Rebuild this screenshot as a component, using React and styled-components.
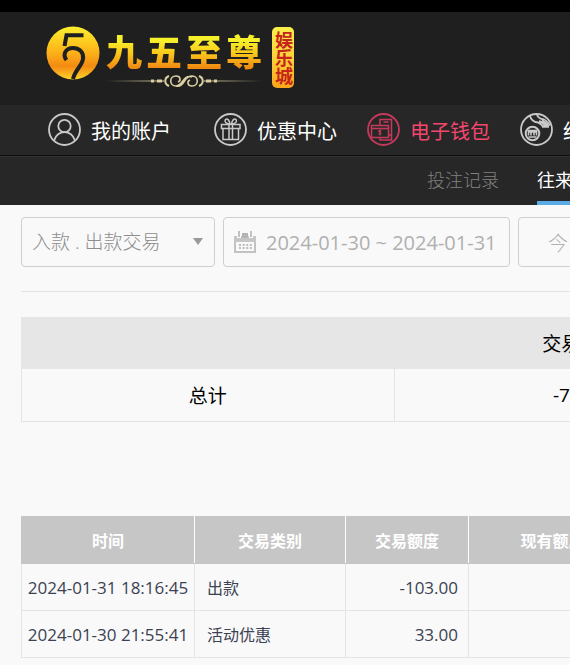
import React, { useState } from 'react'
import styled, { createGlobalStyle } from 'styled-components';


const GlobalStyle = createGlobalStyle`
  body {
    margin: 0;
    background-color: #F9F9F9;
    font-family: 'Open Sans', 'Noto Sans CJK SC', sans-serif;
  }

  * {
    box-sizing: border-box;
  }
`

const Page = styled.div`
  overflow: hidden;
  border-top: 12px solid #000;
`

const Header = styled.header`
  display: flex;
  height: 93px;
  padding: 14px 46px;
  background-color: #1F1F1F;
`

const Logo = styled.a`
  display: flex;
  align-items: flex-start;
  gap: 6px;
  text-decoration: none;

  svg {
    flex: none;
  }
`

const Brand = styled.span`
  display: flex;
  flex-direction: column;
  align-items: center;
  padding-top: 6px;
`

const BrandName = styled.span`
  display: flex;
  gap: 4px;
  font-size: 36px;
  line-height: 42px;
  font-weight: 900;
  color: transparent;
  background: linear-gradient(#F6F02A 20%, #FBC91B 50%, #F08A12 85%);
  background-clip: text;
`

const Seal = styled.span`
  width: 22px;
  height: 61px;
  margin-top: 1px;
  margin-left: 4px;
  border-radius: 5px;
  background: linear-gradient(#F8EE4C, #FFD23A 50%, #F8A51C);
  color: #C4241A;
  font-size: 18px;
  line-height: 22px;
  font-weight: 700;
  text-align: center;
  writing-mode: vertical-rl;
`

const MainNav = styled.nav`
  display: flex;
  gap: 30px;
  height: 51px;
  padding-left: 48px;
  background-color: #272727;
  border-bottom: 1px solid #0E0E0E;
`

const NavLink = styled.a`
  display: flex;
  flex: none;
  align-items: center;
  gap: 9px;
  margin-right: ${(props) => (props.$first ? '13px' : '0')};
  color: ${(props) => (props.$active ? '#F4466E' : '#FFF')};
  font-size: 20px;
  text-decoration: none;
  white-space: nowrap;

  svg {
    color: ${(props) => (props.$active ? '#C53A5C' : '#C9C9C9')};
  }
`

const SubNav = styled.nav`
  display: flex;
  gap: 38px;
  height: 49px;
  padding-left: 427px;
  background-color: #272727;
  border-top: 1px solid #333;
`

const SubLink = styled.a`
  flex: none;
  color: ${(props) => (props.$active ? '#FFF' : '#808080')};
  border-bottom: 4px solid ${(props) => (props.$active ? '#5AAAE6' : 'transparent')};
  font-size: 18px;
  font-weight: ${(props) => (props.$active ? '400' : '300')};
  line-height: 46px;
  text-decoration: none;
`

const Content = styled.main`
  min-width: 788px;
  padding: 12px 21px;
`

const Filters = styled.form`
  display: flex;
  gap: 8px;
  padding-bottom: 24px;
  border-bottom: 1px solid #E4E4E4;
`

const Field = styled.div`
  display: flex;
  align-items: center;
  width: ${(props) => props.$width};
  height: 50px;
  padding: 0 10px;
  border: 1px solid #CFCFCF;
  border-radius: 4px;
  color: #B8B8B8;
`

const TypeSelect = styled.select`
  flex: 1;
  min-width: 0;
  padding: 0;
  border: 0;
  appearance: none;
  background: none;
  color: #8C8C8C;
  font-family: inherit;
  font-size: 19px;
  font-weight: 300;
`

const DateInput = styled.input`
  flex: 1;
  min-width: 0;
  margin-left: 10px;
  padding: 0;
  border: 0;
  background: none;
  color: #B0B0B0;
  font-family: inherit;
  font-size: 20px;
`

const DayButton = styled.button`
  width: 100px;
  height: 50px;
  border: 1px solid #CFCFCF;
  border-radius: 4px;
  background: none;
  color: #B0B0B0;
  font-family: inherit;
  font-size: 20px;
  font-weight: 300;
`

const SummaryTable = styled.table`
  width: 100%;
  margin-top: 25px;
  border-collapse: collapse;
  table-layout: fixed;
  color: #000;
  font-size: 19px;
  text-align: center;

  th {
    height: 51px;
    padding: 0;
    border: 1px solid #E6E6E6;
    background-color: #E6E6E6;
    font-weight: 400;
  }

  td {
    height: 53px;
    padding: 0;
    border: 1px solid #E4E4E4;
  }
`

const RecordTable = styled.table`
  width: 100%;
  margin-top: 94px;
  border-collapse: collapse;
  table-layout: fixed;
  color: #3B4252;
  font-size: 16px;

  th {
    height: 47px;
    padding: 0;
    border: 1px solid #C6C6C6;
    border-right-color: #FFF;
    background-color: #C6C6C6;
    color: #FFF;
    font-weight: 700;
  }

  th + th {
    border-left-color: #FFF;
  }

  td {
    height: 47px;
    padding: 0 12px;
    border: 1px solid #E4E4E4;
  }
`

const TimeCell = styled.td`
  && {
    padding: 0;
    text-align: center;
  }
  font-size: 17px;
  white-space: nowrap;
`

const MoneyCell = styled.td`
  && {
    padding-right: 10px;
  }
  font-size: 17px;
  text-align: right;
`


const records = [
  { time: '2024-01-31 18:16:45', type: '出款', amount: '-103.00' },
  { time: '2024-01-30 21:55:41', type: '活动优惠', amount: '33.00' },
]


function Coin() {
  return (
    <svg width="54" height="54" viewBox="0 0 54 54" aria-hidden="true">
      <defs>
        <linearGradient id="coin" x1="0" y1="0" x2="0" y2="1">
          <stop offset="0" stopColor="#FBEF2E" />
          <stop offset="0.45" stopColor="#FDB71A" />
          <stop offset="0.75" stopColor="#F48A12" />
          <stop offset="1" stopColor="#FBD42A" />
        </linearGradient>
      </defs>
      <circle cx="27" cy="27" r="26.500" fill="url(#coin)" />
      <path d="M37.500 9.300H20.500L18.500 20" fill="none" stroke="#1F1F1F" strokeWidth="4" />
      <path d="M20.500 34C16 28 20 22 27 22c7 0 11 5 10 11-1 7-8 11-10 20" fill="none" stroke="#1F1F1F" strokeWidth="4" />
    </svg>
  )
}

function Flourish() {
  return (
    <svg width="156" height="14" viewBox="0 0 156 14" fill="none" stroke="#D9CFA0" aria-hidden="true">
      <defs>
        <linearGradient id="fade" gradientUnits="userSpaceOnUse" x1="0" y1="0" x2="156" y2="0">
          <stop offset="0" stopColor="#D9CFA0" stopOpacity="0" />
          <stop offset="0.35" stopColor="#D9CFA0" />
          <stop offset="0.65" stopColor="#D9CFA0" />
          <stop offset="1" stopColor="#D9CFA0" stopOpacity="0" />
        </linearGradient>
      </defs>
      <path d="M0 6.500h58v1H0zM98 6.500h58v1H98z" fill="url(#fade)" stroke="none" />
      <path d="M45 7h3M51 7h5M100 7h5M108 7h3" strokeWidth="3" />
      <path d="M63 2c-5 2-5 8 0 10M93 2c5 2 5 8 0 10" strokeWidth="2" />
      <path d="M86 3C77 0 77 12 70 12c-7 0-7-10 0-10 5 0 5 5 2 6M70 12c9 2 7-10 16-10 7 0 7 10 0 10-5 0-5-5-2-6" strokeWidth="1.600" />
    </svg>
  )
}

function RoundIcon({ children }) {
  return (
    <svg width="34" height="34" viewBox="0 0 34 34" fill="none" stroke="currentColor" strokeWidth="1.500" aria-hidden="true">
      <circle cx="16.500" cy="16.500" r="15.500" strokeWidth="1.800" />
      {children}
    </svg>
  )
}

function UserIcon() {
  return (
    <RoundIcon>
      <circle cx="16.500" cy="13" r="6.200" strokeWidth="1.800" />
      <path d="M6 27.500c2-5.500 6-8.300 10.500-8.300S25 22 27 27.500" strokeWidth="1.800" />
    </RoundIcon>
  )
}

function GiftIcon() {
  return (
    <RoundIcon>
      <path d="M7.500 11.500h18.500v4H7.500zM9 15.500h15.500v11H9zM15 11.500v15M18.500 11.500v15" />
      <path d="M15.500 11C12 10.500 10 9 11.500 6.500c2-1.500 4 1 4.500 4.500M18 11c3.500-.5 5.500-2 4-4.500-2-1.500-4 1-4.500 4.500" />
    </RoundIcon>
  )
}

function WalletIcon() {
  return (
    <RoundIcon>
      <path d="M13 12.500V6.500h11.500V27H13v-2.500M16.500 9h5M21.500 22h3" />
      <path d="M4.500 12.500h17v12h-17zM4.500 15.500h17" />
      <path d="M14.500 17.500c-2.500-.6-3.500.8-1.700 1.700s1.500 2.300-1.300 1.800M13 16.500v6" strokeWidth="1.200" />
    </RoundIcon>
  )
}

function BonusIcon() {
  return (
    <RoundIcon>
      <circle cx="12.500" cy="20.500" r="6.800" strokeWidth="2" />
      <path d="M7.500 17.500h10M8.500 22.500v-3.500h8v3.500M11 19.500v3M14 19.500v3M8.500 24h8" strokeWidth="1.600" />
      <path d="M10 3c1 4 4 6 8 6.500 2 .3 3 2 4.500 3.500M17 2c1 3 4 4 7 4.500 2 .5 4 3 6 6" strokeWidth="1.800" />
      <path d="M19 8.500c3 0 4 1.500 8 5M22 7.500c2 1 4 2 6 5M22 13.500h7" strokeWidth="2.400" />
    </RoundIcon>
  )
}

function CalendarIcon() {
  return (
    <svg width="22" height="22" viewBox="0 0 22 22" aria-hidden="true">
      <path d="M1 6h20v15H1z" fill="none" stroke="#C2C2C2" strokeWidth="2" />
      <path d="M0 5h22v6H0z" fill="#C6C6C6" />
      <path d="M8 2h6v5H8z" fill="#B4B4B4" />
      <path d="M5 0v7M17 0v7" stroke="#F9F9F9" strokeWidth="4" />
      <path d="M5 0v6M17 0v6" stroke="#C2C2C2" strokeWidth="2" />
      <path d="M5 14h13M5 17h13" stroke="#BDBDBD" strokeWidth="2" strokeDasharray="2 1.600" />
    </svg>
  )
}


export default function App() {

  const [type, setType] = useState('all');
  const [date, setDate] = useState('2024-01-30 ~ 2024-01-31');

  return (
    <>
      <GlobalStyle />
      <Page lang="zh-CN">
        <Header>
          <Logo href="#home">
            <Coin />
            <Brand>
              <BrandName>
                {[...'九五至尊'].map((char) => <span key={char}>{char}</span>)}
              </BrandName>
              <Flourish />
            </Brand>
            <Seal>娱乐城</Seal>
          </Logo>
        </Header>

        <MainNav>
          <NavLink href="#account" $first><UserIcon />我的账户</NavLink>
          <NavLink href="#promo"><GiftIcon />优惠中心</NavLink>
          <NavLink href="#wallet" $active><WalletIcon />电子钱包</NavLink>
          <NavLink href="#bonus"><BonusIcon />红利</NavLink>
        </MainNav>

        <SubNav>
          <SubLink href="#bets">投注记录</SubLink>
          <SubLink href="#history" $active>往来记录</SubLink>
        </SubNav>

        <Content>
          <Filters onSubmit={(e) => e.preventDefault()}>
            <Field $width="194px">
              <TypeSelect aria-label="交易类别" value={type} onChange={(e) => setType(e.target.value)}>
                <option value="all">入款 . 出款交易</option>
              </TypeSelect>
              <svg width="12" height="8" viewBox="0 0 12 8" aria-hidden="true">
                <path d="M1 0h10L6 7z" fill="#999" />
              </svg>
            </Field>
            <Field $width="287px">
              <CalendarIcon />
              <DateInput aria-label="时间" value={date} onChange={(e) => setDate(e.target.value)} />
            </Field>
            <DayButton type="button">今日</DayButton>
          </Filters>

          <SummaryTable>
            <thead>
              <tr>
                <th></th>
                <th scope="col">交易额度</th>
              </tr>
            </thead>
            <tbody>
              <tr>
                <td>总计</td>
                <td>-70.00</td>
              </tr>
            </tbody>
          </SummaryTable>

          <RecordTable>
            <colgroup>
              <col style={{ width: '173px' }} />
              <col style={{ width: '151px' }} />
              <col style={{ width: '123px' }} />
              <col style={{ width: '168px' }} />
              <col />
            </colgroup>
            <thead>
              <tr>
                <th scope="col">时间</th>
                <th scope="col">交易类别</th>
                <th scope="col">交易额度</th>
                <th scope="col">现有额度</th>
                <th scope="col">备注</th>
              </tr>
            </thead>
            <tbody>
              {records.map((item) => (
                <tr key={item.time}>
                  <TimeCell>{item.time}</TimeCell>
                  <td>{item.type}</td>
                  <MoneyCell>{item.amount}</MoneyCell>
                  <td></td>
                  <td></td>
                </tr>
              ))}
            </tbody>
          </RecordTable>
        </Content>
      </Page>
    </>
  )
}
